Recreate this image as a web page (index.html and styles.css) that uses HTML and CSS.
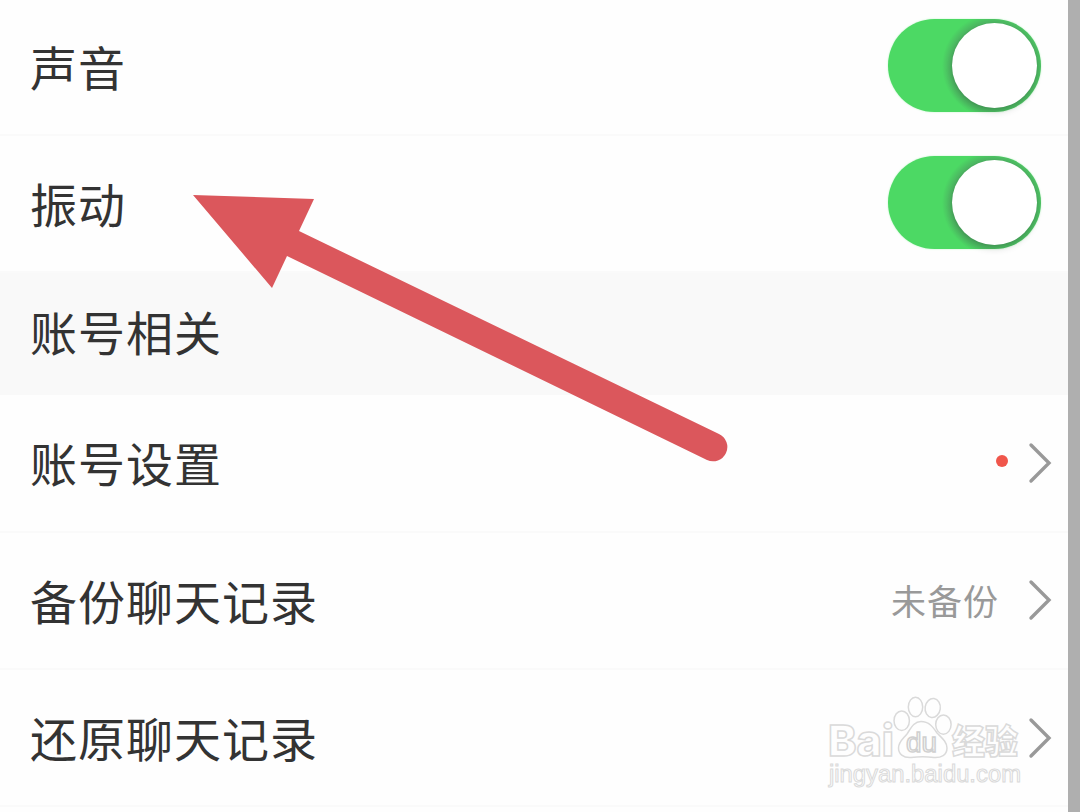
FILE: index.html
```html
<!DOCTYPE html>
<html lang="zh-CN">
<head>
    <meta charset="UTF-8">
    <meta name="viewport" content="width=device-width, initial-scale=1.0">
    <title>设置</title>
    <link rel="stylesheet" href="styles.css">
</head>
<body>
    <div class="page">
        <ul class="list">
            <li class="first">
                <span class="name">声音</span>
                <div class="switch"><i></i></div>
            </li>
            <li>
                <span class="name">振动</span>
                <div class="switch"><i></i></div>
            </li>
            <li class="title">
                <span class="name">账号相关</span>
            </li>
            <li>
                <span class="name">账号设置</span>
                <span class="dot"></span>
                <svg class="more" width="24" height="42" viewBox="0 0 24 42"><path d="M3 3L21 21L3 39"/></svg>
            </li>
            <li>
                <span class="name">备份聊天记录</span>
                <span class="state">未备份</span>
                <svg class="more" width="24" height="42" viewBox="0 0 24 42"><path d="M3 3L21 21L3 39"/></svg>
            </li>
            <li>
                <span class="name">还原聊天记录</span>
                <svg class="more" width="24" height="42" viewBox="0 0 24 42"><path d="M3 3L21 21L3 39"/></svg>
            </li>
        </ul>
    </div>

    <!-- 箭头 -->
    <svg class="arrow" width="540" height="272" viewBox="190 192 540 272">
        <path d="M193 195L314 199L299 231L719 434A13.8 13.8 0 0 1 707 460L287 256L272 288Z"/>
    </svg>

    <!-- 水印 -->
    <svg class="mark" width="210" height="100" viewBox="820 692 210 100">
        <text class="logo" x="828" y="756" textLength="66" lengthAdjust="spacingAndGlyphs">Bai</text>
        <ellipse cx="901.7" cy="720.7" rx="7.7" ry="9.8"/>
        <ellipse cx="915.5" cy="707" rx="7.2" ry="9.7"/>
        <ellipse cx="932.7" cy="708" rx="7.6" ry="9.5" transform="rotate(8 932.7 708)"/>
        <ellipse cx="943.4" cy="724.6" rx="7.7" ry="9.6"/>
        <path d="M921 721.5C929 721.5 933 727 937 733C942 738 947 742 947 748C947 755 941 758 934 757.5C927 756.5 918 756.5 911 757.5C903 758 898.500 754 898.500 748C898.500 742 903 739 907 734C911 728 914 721.5 921 721.5Z"/>
        <text class="du" x="906" y="752" textLength="31" lengthAdjust="spacingAndGlyphs">du</text>
        <text class="cn" x="952" y="754" textLength="66" lengthAdjust="spacingAndGlyphs">经验</text>
        <text class="url" x="829" y="782" textLength="192" lengthAdjust="spacingAndGlyphs">jingyan.baidu.com</text>
    </svg>
</body>
</html>
```
FILE: styles.css
```css
*{
    margin: 0;
    padding: 0;
}
body{
    height: 812px;
    overflow: hidden;
    background-color: #afafaf;
    font-family: "Noto Sans CJK SC", sans-serif;
}
.page{
    width: 1068px;
    height: 812px;
    background-color: #fefefe;
}
.list{
    list-style: none;
}
.list>li{
    display: flex;
    align-items: center;
    height: 137.3px;
    padding: 0 16px 0 30px;
    box-sizing: border-box;
    border-bottom: 2px solid #fafafa;
}
.list>.first{
    height: 136px;
    padding-bottom: 2px;
}
.list>.title{
    height: 122px;
    padding-bottom: 6px;
    background-color: #f9f9f9;
    border-bottom: none;
}
.name{
    flex: 1;
    margin-bottom: 1px;
    color: #333;
    font-size: 47px;
    line-height: 70px;
    letter-spacing: 1px;
}
.switch{
    width: 153px;
    height: 93px;
    margin: 0 11px 2px 0;
    padding: 4px;
    box-sizing: border-box;
    border-radius: 47px;
    background-color: #4cd964;
    background-image: radial-gradient(circle at 106px 47px, #46a35a 41px, #4cb561 44px, #4cd964 52px);
    box-shadow: 0 0 2px #b9f5c3;
}
.switch i{
    display: block;
    width: 85px;
    height: 85px;
    margin-left: 60px;
    border-radius: 50%;
    background-color: #fff;
    box-shadow: 0 5px 6px rgba(0, 0, 0, .1);
}
.dot{
    width: 12px;
    height: 12px;
    margin: 0 20px 3px 0;
    border-radius: 50%;
    background-color: #f0564b;
}
.state{
    margin: 0 29px 1px 0;
    color: #999;
    font-size: 35px;
    line-height: 52px;
    letter-spacing: 1px;
}
.more{
    fill: none;
    stroke: #999;
    stroke-width: 3.4;
    stroke-linecap: round;
}
.arrow{
    position: absolute;
    left: 190px;
    top: 192px;
    fill: #db575c;
}
.mark{
    position: absolute;
    left: 820px;
    top: 692px;
    fill: #fefefe;
    stroke: #dadada;
    stroke-width: 1.5;
}
.logo{
    font: 800 43px Inter, sans-serif;
}
.du{
    font: 27px "Liberation Sans", sans-serif;
    stroke: #d0d0d0;
}
.cn{
    font: 900 34px "Noto Sans CJK SC", sans-serif;
}
.url{
    font: 23px "Liberation Sans", sans-serif;
    stroke-width: 1;
}
```
